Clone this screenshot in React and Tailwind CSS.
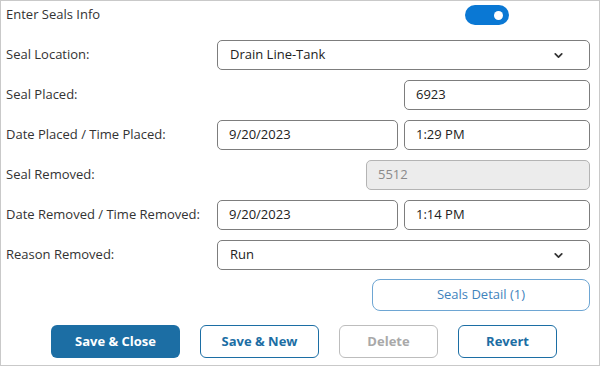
import { ChevronDown } from 'lucide-react';

const font = { fontFamily: '"Open Sans", "Noto Sans", sans-serif' };

function Field({ value, className = '', disabled = false }) {
  return (
    <div
      className={`h-[30px] rounded-[5px] border flex items-center px-[11px] text-[13px] ${
        disabled ? 'bg-[#ececec] border-[#b4b4b4] text-[#8a8a8a]' : 'bg-white border-[#7d7d7d] text-[#222]'
      } ${className}`}
    >
      {value}
    </div>
  );
}

function Select({ value }) {
  return (
    <div className="h-[30px] w-full rounded-[5px] border border-[#7d7d7d] bg-white flex items-center justify-between pl-[12px] pr-[24px] text-[13px] text-[#222]">
      <span>{value}</span>
      <ChevronDown size={13} strokeWidth={3.2} className="text-[#333]" />
    </div>
  );
}

function Row({ label, children }) {
  return (
    <div className="flex items-center h-[30px]">
      <div className="w-[211px] shrink-0 text-[13px] text-[#333]">{label}</div>
      <div className="flex-1 flex">{children}</div>
    </div>
  );
}

export default function App() {
  return (
    <div style={font} className="w-[600px] h-[366px] border border-[#c9c9c9] bg-white pl-[5px] pr-[9px] pt-[3px]">
      <div className="flex items-center h-[22px]">
        <div className="w-[211px] shrink-0 text-[13px] text-[#333]">Enter Seals Info</div>
        <div className="flex-1 flex">
          <div className="ml-[248px] w-[44px] h-[20px] rounded-full bg-[#0a78d4] flex items-center justify-end pr-[6px]">
            <div className="w-[9px] h-[9px] rounded-full bg-white" />
          </div>
        </div>
      </div>

      <div className="flex flex-col gap-[10px] mt-[14px]">
        <Row label="Seal Location:">
          <Select value="Drain Line-Tank" />
        </Row>
        <Row label="Seal Placed:">
          <Field value="6923" className="ml-auto w-[186px]" />
        </Row>
        <Row label="Date Placed / Time Placed:">
          <div className="flex w-full gap-[6px]">
            <Field value="9/20/2023" className="w-[181px]" />
            <Field value="1:29 PM" className="flex-1" />
          </div>
        </Row>
        <Row label="Seal Removed:">
          <Field value="5512" disabled className="ml-auto w-[224px]" />
        </Row>
        <Row label="Date Removed / Time Removed:">
          <div className="flex w-full gap-[6px]">
            <Field value="9/20/2023" className="w-[181px]" />
            <Field value="1:14 PM" className="flex-1" />
          </div>
        </Row>
        <Row label="Reason Removed:">
          <Select value="Run" />
        </Row>
      </div>

      <div className="flex justify-end mt-[9px]">
        <button className="w-[218px] h-[32px] rounded-[8px] border border-[#6ea6d3] text-[#3f83bd] text-[13px] bg-white">
          Seals Detail (1)
        </button>
      </div>

      <div className="flex gap-[20px] pl-[45px] mt-[14px]">
        <button className="w-[129px] h-[33px] rounded-[6px] bg-[#1c6ea4] text-white text-[13px] font-bold">
          Save &amp; Close
        </button>
        <button className="w-[119px] h-[33px] rounded-[6px] border border-[#1c6ea4] text-[#1c6ea4] text-[13px] font-bold bg-white">
          Save &amp; New
        </button>
        <button className="w-[99px] h-[33px] rounded-[6px] border border-[#bdbdbd] text-[#a9a9a9] text-[13px] font-bold bg-white">
          Delete
        </button>
        <button className="w-[99px] h-[33px] rounded-[6px] border border-[#1c6ea4] text-[#1c6ea4] text-[13px] font-bold bg-white">
          Revert
        </button>
      </div>
    </div>
  );
}
